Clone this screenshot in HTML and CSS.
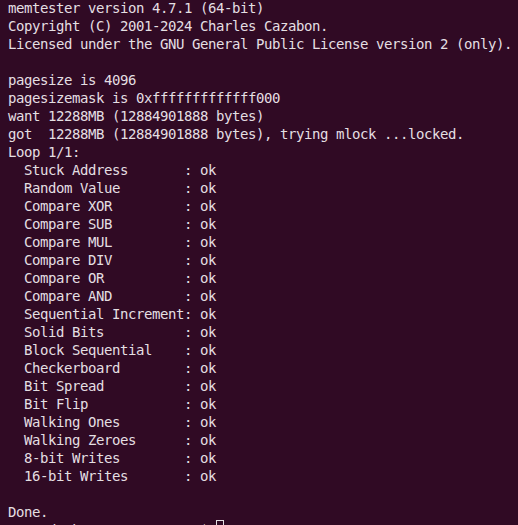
FILE: index.html
```html
<!DOCTYPE html>
<html lang="en">
<head>
<meta charset="utf-8">
<title>memtester</title>
<link rel="stylesheet" href="styles.css">
</head>
<body>
<main class="terminal">
<pre class="output">memtester version 4.7.1 (64-bit)
Copyright (C) 2001-2024 Charles Cazabon.
Licensed under the GNU General Public License version 2 (only).

pagesize is 4096
pagesizemask is 0xfffffffffffff000
want 12288MB (12884901888 bytes)
got  12288MB (12884901888 bytes), trying mlock ...locked.
Loop 1/1:
  Stuck Address       : ok
  Random Value        : ok
  Compare XOR         : ok
  Compare SUB         : ok
  Compare MUL         : ok
  Compare DIV         : ok
  Compare OR          : ok
  Compare AND         : ok
  Sequential Increment: ok
  Solid Bits          : ok
  Block Sequential    : ok
  Checkerboard        : ok
  Bit Spread          : ok
  Bit Flip            : ok
  Walking Ones        : ok
  Walking Zeroes      : ok
  8-bit Writes        : ok
  16-bit Writes       : ok

Done.
<span class="prompt-user">user@desktop</span>:<span class="prompt-path">~/memtester</span>$ <span class="cursor"> </span></pre>
</main>
</body>
</html>
```

FILE: styles.css
```css
html, body {
  margin: 0;
  padding: 0;
  background: #300a24;
  height: 100%;
  overflow: hidden;
}

.terminal {
  padding: 0 8px;
  margin-top: -1px;
}

.output {
  margin: 0;
  font-family: "DejaVu Sans Mono", monospace;
  font-size: 14px;
  letter-spacing: -0.43px;
  line-height: 18px;
  color: #e4dfe2;
  white-space: pre;
}

.prompt-user,
.prompt-path {
  color: #e4dfe2;
}

.cursor {
  display: inline-block;
  width: 8px;
  height: 18px;
  box-sizing: border-box;
  border: 1px solid #e4dfe2;
  vertical-align: top;
  margin-top: -1px;
  letter-spacing: 0;
}
```
